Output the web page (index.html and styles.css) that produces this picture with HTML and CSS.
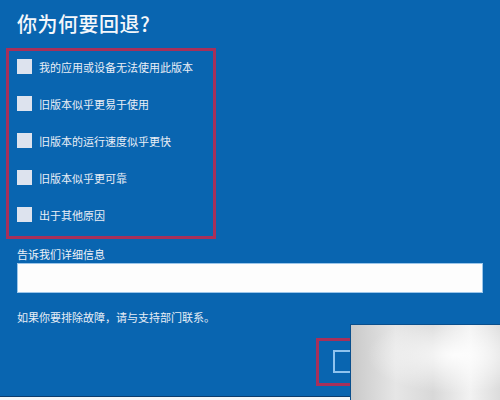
FILE: index.html
```html
<!DOCTYPE html>
<html lang="zh-CN">
<head>
    <meta charset="UTF-8">
    <title>你为何要回退?</title>
    <link rel="stylesheet" href="styles.css">
</head>
<body>
    <div class="page">
        <h1 class="title">你为何要回退?</h1>

        <div class="reasons">
            <label class="reason"><span class="check"></span>我的应用或设备无法使用此版本</label>
            <label class="reason"><span class="check"></span>旧版本似乎更易于使用</label>
            <label class="reason"><span class="check"></span>旧版本的运行速度似乎更快</label>
            <label class="reason"><span class="check"></span>旧版本似乎更可靠</label>
            <label class="reason"><span class="check"></span>出于其他原因</label>
        </div>

        <div class="details">
            <div class="details-label">告诉我们详细信息</div>
            <div class="details-input"></div>
        </div>

        <p class="support">如果你要排除故障，请与支持部门联系。</p>

        <div class="footer">
            <div class="mark">
                <span class="btn"></span>
            </div>
        </div>
    </div>

    <div class="stamp"></div>
</body>
</html>
```

FILE: styles.css
```css
* {
    margin: 0;
    padding: 0;
    box-sizing: border-box;
}

body {
    width: 500px;
    height: 400px;
    background: #f4f6f8;
    font-family: "Noto Sans CJK SC", "Liberation Sans", sans-serif;
    overflow: hidden;
    position: relative;
}

.page {
    height: 397px;
    background: #0965b0;
    border-bottom: 1px solid #0b3d6e;
    padding: 12px 17px 0 17px;
    color: #eef2f8;
}

.title {
    font-size: 20px;
    line-height: 24px;
    font-weight: 500;
    color: #f4f7fb;
    letter-spacing: 0.5px;
}

/* red highlight box around the choices */
.reasons {
    margin: 12px 0 0 -11px;
    width: 210px;
    height: 191px;
    border: 3px solid #a8305a;
    padding: 8px 0 0 8px;
    display: flex;
    flex-direction: column;
    gap: 22px;
}

.reason {
    display: flex;
    align-items: center;
    gap: 7px;
    height: 15px;
    font-size: 11px;
    color: #e9eef6;
}

.check {
    width: 15px;
    height: 15px;
    background: #dde3ee;
    flex-shrink: 0;
}

.details {
    margin-top: 8px;
}

.details-label {
    font-size: 11px;
    line-height: 15px;
    color: #eef2f8;
}

.details-input {
    margin-top: 1px;
    width: 466px;
    height: 30px;
    background: #fdfdfd;
    border: 1px solid #9cc6ea;
}

.support {
    margin-top: 17px;
    font-size: 11px;
    line-height: 15px;
    color: #e6edf6;
}

.footer {
    display: flex;
    justify-content: flex-end;
    margin-top: 13px;
    padding-right: 0;
}

.mark {
    width: 40px;
    height: 48px;
    margin-right: 127px;
    border: 3px solid #a8305a;
    padding: 9px 0 0 14px;
}

.btn {
    display: block;
    width: 30px;
    height: 23px;
    border: 2px solid #8fc3ee;
}

/* grey blur patch in the lower right corner */
.stamp {
    position: absolute;
    left: 350px;
    top: 324px;
    width: 150px;
    height: 76px;
    border-top: 1px solid #0a4f8c;
    border-left: 1px solid #0a4f8c;
    background:
        radial-gradient(ellipse at 70% 40%, rgba(255, 255, 255, 0.9), rgba(255, 255, 255, 0) 60%),
        linear-gradient(90deg, #c9c9c9 0%, #e6e6e6 30%, #d8d8d8 55%, #f2f2f2 80%, #dcdcdc 100%);
}
```
